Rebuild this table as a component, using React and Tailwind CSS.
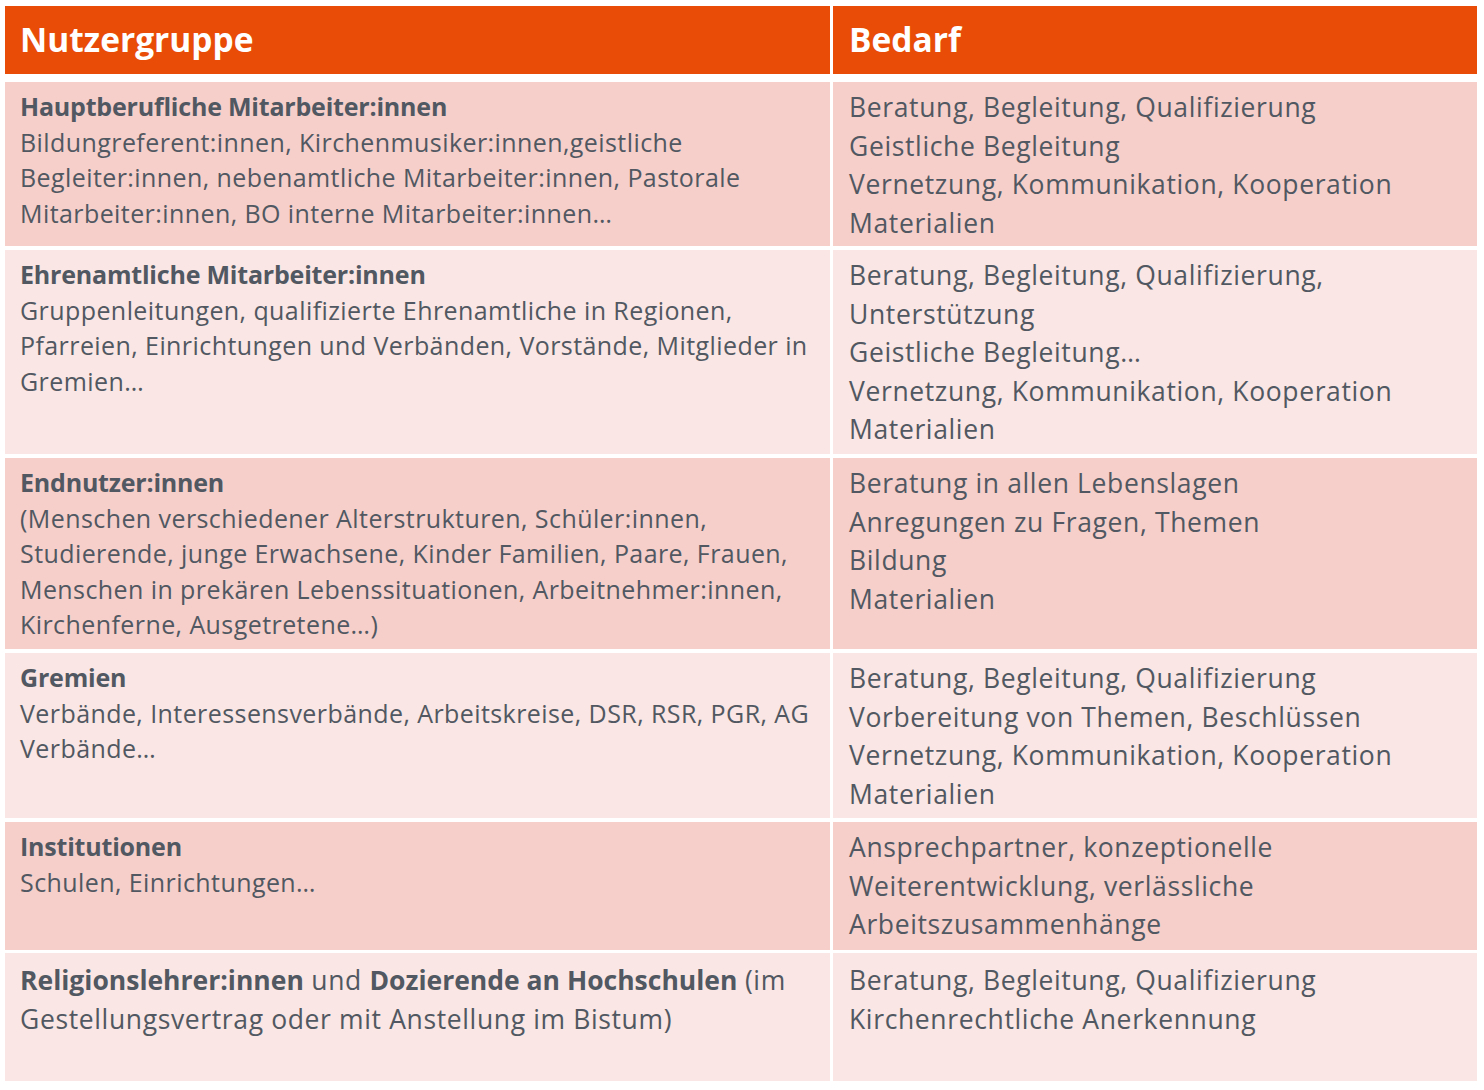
const zeilen = [
  {
    h: 'h-[164px]',
    dunkel: true,
    titel: 'Hauptberufliche Mitarbeiter:innen',
    links: [
      'Bildungreferent:innen, Kirchenmusiker:innen,geistliche',
      'Begleiter:innen, nebenamtliche Mitarbeiter:innen, Pastorale',
      'Mitarbeiter:innen, BO interne Mitarbeiter:innen…',
    ],
    rechts: [
      'Beratung, Begleitung, Qualifizierung',
      'Geistliche Begleitung',
      'Vernetzung, Kommunikation, Kooperation',
      'Materialien',
    ],
  },
  {
    h: 'h-[204px]',
    dunkel: false,
    titel: 'Ehrenamtliche Mitarbeiter:innen',
    links: [
      'Gruppenleitungen, qualifizierte Ehrenamtliche in Regionen,',
      'Pfarreien, Einrichtungen und Verbänden, Vorstände, Mitglieder in',
      'Gremien…',
    ],
    rechts: [
      'Beratung, Begleitung, Qualifizierung,',
      'Unterstützung',
      'Geistliche Begleitung…',
      'Vernetzung, Kommunikation, Kooperation',
      'Materialien',
    ],
  },
  {
    h: 'h-[191px]',
    dunkel: true,
    titel: 'Endnutzer:innen',
    links: [
      '(Menschen verschiedener Alterstrukturen, Schüler:innen,',
      'Studierende, junge Erwachsene, Kinder Familien, Paare, Frauen,',
      'Menschen in prekären Lebenssituationen, Arbeitnehmer:innen,',
      'Kirchenferne, Ausgetretene…)',
    ],
    rechts: ['Beratung in allen Lebenslagen', 'Anregungen zu Fragen, Themen', 'Bildung', 'Materialien'],
  },
  {
    h: 'h-[165px]',
    dunkel: false,
    titel: 'Gremien',
    links: ['Verbände, Interessensverbände, Arbeitskreise, DSR, RSR, PGR, AG', 'Verbände…'],
    rechts: [
      'Beratung, Begleitung, Qualifizierung',
      'Vorbereitung von Themen, Beschlüssen',
      'Vernetzung, Kommunikation, Kooperation',
      'Materialien',
    ],
  },
  {
    h: 'h-[128px]',
    dunkel: true,
    titel: 'Institutionen',
    links: ['Schulen, Einrichtungen…'],
    rechts: ['Ansprechpartner, konzeptionelle', 'Weiterentwicklung, verlässliche', 'Arbeitszusammenhänge'],
  },
]

function Zelle({ dunkel, children, className = '' }) {
  return (
    <div className={`${dunkel ? 'bg-[#f6cfcb]' : 'bg-[#fae6e4]'} ${className}`}>{children}</div>
  )
}

export default function App() {
  return (
    <div
      className="bg-white w-[1484px] h-[1090px] pt-[6px] pl-[5px] text-[#515861] whitespace-nowrap"
      style={{ fontFamily: '"Open Sans", Lato, sans-serif' }}
    >
      <div className="grid grid-cols-[825px_644px] gap-x-[3px] gap-y-[4px]">
        <div className="h-[68px] bg-[#e84c07] text-white font-bold text-[33.5px] leading-[66px] pl-[15px] mb-[4px]">
          Nutzergruppe
        </div>
        <div className="h-[68px] bg-[#e84c07] text-white font-bold text-[33.5px] leading-[66px] pl-[16px] mb-[4px]">
          Bedarf
        </div>

        {zeilen.map((z, i) => (
          <div key={i} className="contents">
            <Zelle
              dunkel={z.dunkel}
              className={`${z.h} pl-[15px] pt-[7px] text-[25px] leading-[35.5px] tracking-[0.42px]`}
            >
              <div className="font-bold tracking-[-0.2px]">{z.titel}</div>
              {z.links.map((t) => (
                <div key={t}>{t}</div>
              ))}
            </Zelle>
            <Zelle
              dunkel={z.dunkel}
              className={`${z.h} pl-[16px] pt-[6px] text-[26.5px] leading-[38.5px] tracking-[0.63px]`}
            >
              {z.rechts.map((t) => (
                <div key={t}>{t}</div>
              ))}
            </Zelle>
          </div>
        ))}

        <Zelle
          dunkel={false}
          className="h-[128px] -mt-[1px] pl-[15px] pt-[8px] text-[26.5px] leading-[38.5px] tracking-[0.63px]"
        >
          <b className="tracking-normal">Religionslehrer:innen</b> und{' '}
          <b className="tracking-normal">Dozierende an Hochschulen</b> (im
          <br />
          Gestellungsvertrag oder mit Anstellung im Bistum)
        </Zelle>
        <Zelle
          dunkel={false}
          className="h-[128px] -mt-[1px] pl-[16px] pt-[8px] text-[26.5px] leading-[38.5px] tracking-[0.63px]"
        >
          <div>Beratung, Begleitung, Qualifizierung</div>
          <div>Kirchenrechtliche Anerkennung</div>
        </Zelle>
      </div>
    </div>
  )
}
